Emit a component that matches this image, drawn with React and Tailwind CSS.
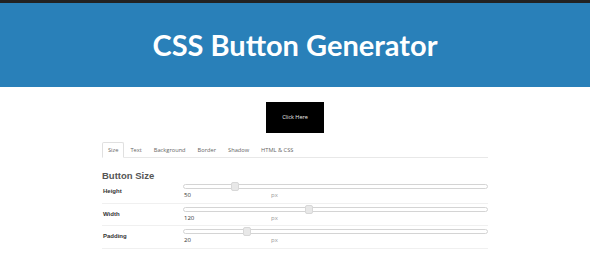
import React from "react";

const tabs = ["Size", "Text", "Background", "Border", "Shadow", "HTML & CSS"];

const rows = [
  { label: "Height", value: 50, pos: 0.155 },
  { label: "Width", value: 120, pos: 0.4 },
  { label: "Padding", value: 20, pos: 0.195 },
];

function Slider({ pos }) {
  return (
    <div className="relative h-[5px] w-full rounded-full border border-[#d4d4d4] bg-white">
      <div
        className="absolute top-[-3px] h-[9px] w-[8px] rounded-[2px] border border-[#d8d8d8] bg-[#e8e8e8]"
        style={{ left: `${pos * 100}%` }}
      />
    </div>
  );
}

export default function App() {
  return (
    <div className="min-h-[260px] bg-white font-['Open_Sans',sans-serif]">
      <div className="h-[3px] bg-[#222]" />
      <header className="flex h-[84px] items-center justify-center bg-[#2980b9]">
        <h1 className="font-['Lato',sans-serif] text-[29px] font-bold text-white">
          CSS Button Generator
        </h1>
      </header>

      <div className="mx-auto w-[386px] pt-[15px]">
        <div className="flex justify-center">
          <div className="flex h-[31px] w-[58px] items-center justify-center bg-black text-[5.5px] text-[#eee]">
            Click Here
          </div>
        </div>

        <div className="mt-[9px] flex border-b border-[#e8e8e8] text-[5.7px] leading-[8px] text-[#666]">
          {tabs.map((t, i) => (
            <div
              key={t}
              className={`-mb-px px-[5px] py-[3px] ${
                i === 0
                  ? "rounded-t-[2px] border border-[#e0e0e0] border-b-white bg-white"
                  : "border border-transparent"
              }`}
            >
              {t}
            </div>
          ))}
        </div>

        <h2 className="mt-[12px] font-['Liberation_Sans',sans-serif] text-[9.5px] font-bold leading-[11px] text-[#555]">
          Button Size
        </h2>

        <div>
          {rows.map((r) => (
            <div
              key={r.label}
              className="flex h-[22.5px] items-center border-b border-[#f0f0f0]"
            >
              <div className="w-[81px] pl-px font-['Liberation_Sans',sans-serif] text-[6px] font-bold text-[#333]">
                {r.label}
              </div>
              <div className="flex-1">
                <Slider pos={r.pos} />
                <div className="mt-[3px] flex text-[6px] leading-[7px] text-[#333]">
                  <span className="w-[88px] pl-px">{r.value}</span>
                  <span className="text-[#999]">px</span>
                </div>
              </div>
            </div>
          ))}
        </div>
      </div>
    </div>
  );
}
